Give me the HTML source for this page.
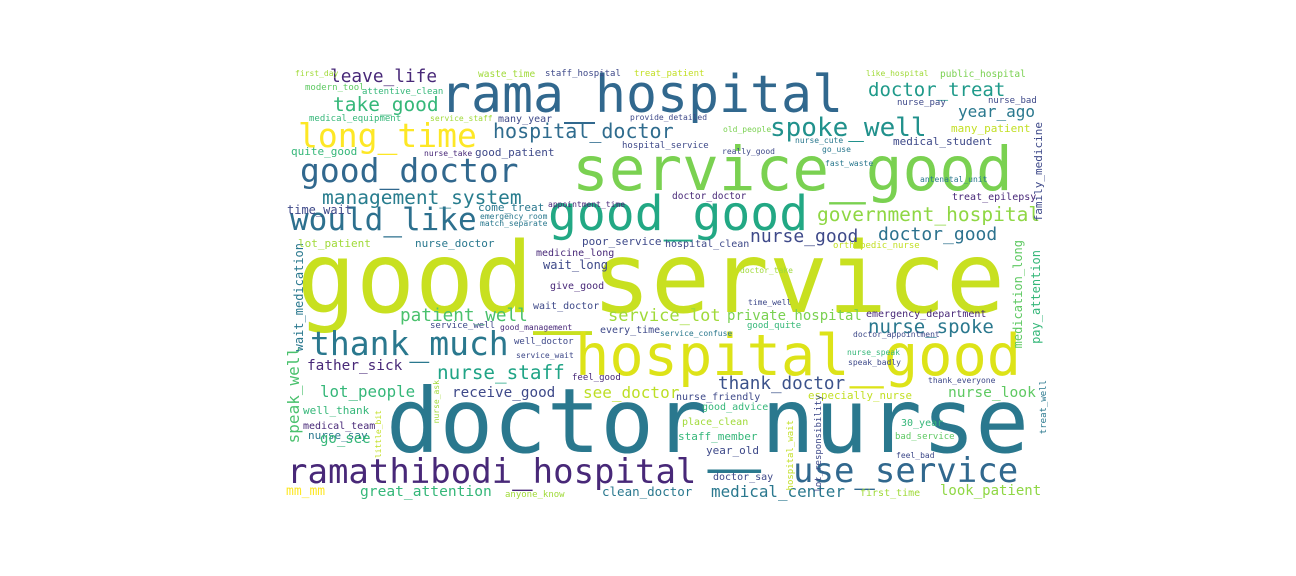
<!DOCTYPE html>
<html><head><meta charset="utf-8"><style>
html,body{margin:0;padding:0;background:#fff;width:1296px;height:576px;overflow:hidden}
#c{position:relative;width:1296px;height:576px}
#c span{position:absolute;font-family:"DejaVu Sans Mono","Liberation Mono",monospace;line-height:1;white-space:nowrap}
#c span.v{writing-mode:vertical-rl;transform:rotate(180deg)}
</style></head><body><div id="c">
<span style="left:297px;top:230px;font-size:98px;color:#c8e020">good_service</span>
<span style="left:386px;top:377px;font-size:89px;color:#2a788e">doctor_nurse</span>
<span style="left:440px;top:70px;font-size:51.5px;color:#31688e">rama_hospital</span>
<span style="left:572px;top:139px;font-size:61px;color:#7ad151">service_good</span>
<span style="left:548px;top:190px;font-size:48px;color:#22a884">good_good</span>
<span style="left:575px;top:328px;font-size:57px;color:#dde318">hospital_good</span>
<span style="left:287px;top:455px;font-size:34px;color:#482878">ramathibodi_hospital</span>
<span style="left:793px;top:454px;font-size:34px;color:#31688e">use_service</span>
<span style="left:298px;top:119px;font-size:33px;color:#fde725">long_time</span>
<span style="left:300px;top:154px;font-size:33px;color:#31688e">good_doctor</span>
<span style="left:290px;top:205px;font-size:31px;color:#2d708e">would_like</span>
<span style="left:310px;top:327px;font-size:33px;color:#2a788e">thank_much</span>
<span style="left:493px;top:121px;font-size:20px;color:#2f6c8e">hospital_doctor</span>
<span style="left:770px;top:115px;font-size:26px;color:#21918c">spoke_well</span>
<span style="left:868px;top:81px;font-size:19px;color:#1f9a8a">doctor_treat</span>
<span style="left:322px;top:188px;font-size:19.5px;color:#287d8e">management_system</span>
<span style="left:817px;top:205px;font-size:19.5px;color:#8fd744">government_hospital</span>
<span style="left:333px;top:95px;font-size:19.5px;color:#35b779">take_good</span>
<span style="left:330px;top:68px;font-size:17.8px;color:#482878">leave_life</span>
<span style="left:750px;top:228px;font-size:18px;color:#3e4989">nurse_good</span>
<span style="left:878px;top:226px;font-size:18px;color:#2c728e">doctor_good</span>
<span style="left:958px;top:104px;font-size:16px;color:#2a788e">year_ago</span>
<span style="left:400px;top:308px;font-size:17.7px;color:#4ac16d">patient_well</span>
<span style="left:608px;top:308px;font-size:17px;color:#a0da39">service_lot</span>
<span style="left:868px;top:318px;font-size:19px;color:#2a788e">nurse_spoke</span>
<span style="left:727px;top:309px;font-size:14px;color:#7ad151">private_hospital</span>
<span style="left:437px;top:363px;font-size:19.3px;color:#20a486">nurse_staff</span>
<span style="left:307px;top:359px;font-size:14.4px;color:#482878">father_sick</span>
<span style="left:320px;top:384px;font-size:15.8px;color:#35b779">lot_people</span>
<span style="left:452px;top:386px;font-size:14.3px;color:#3e4989">receive_good</span>
<span style="left:583px;top:385px;font-size:16px;color:#bddf26">see_doctor</span>
<span style="left:718px;top:376px;font-size:17.6px;color:#3b528b">thank_doctor</span>
<span style="left:948px;top:386px;font-size:14.6px;color:#5ec962">nurse_look</span>
<span style="left:808px;top:391px;font-size:10.8px;color:#c2df23">especially_nurse</span>
<span style="left:360px;top:485px;font-size:14.6px;color:#35b779">great_attention</span>
<span style="left:602px;top:486px;font-size:12.5px;color:#2a788e">clean_doctor</span>
<span style="left:711px;top:484px;font-size:15.9px;color:#2a788e">medical_center</span>
<span style="left:940px;top:484px;font-size:14px;color:#8fd744">look_patient</span>
<span style="left:286px;top:485px;font-size:13px;color:#fde725">mm_mm</span>
<span class="v" style="left:286px;top:347px;font-size:16px;color:#4ac16d">speak_well</span>
<span class="v" style="left:293px;top:243px;font-size:12px;color:#2a788e">wait_medication</span>
<span style="left:308px;top:430px;font-size:11px;color:#2a788e">nurse_say</span>
<span style="left:320px;top:432px;font-size:14px;color:#35b779">go_see</span>
<span style="left:303px;top:405px;font-size:11px;color:#35b779">well_thank</span>
<span style="left:303px;top:422px;font-size:10px;color:#482878">medical_team</span>
<span style="left:287px;top:204px;font-size:12px;color:#3e4989">time_wait</span>
<span style="left:298px;top:238px;font-size:11px;color:#a0da39">lot_patient</span>
<span style="left:415px;top:238px;font-size:11px;color:#2a788e">nurse_doctor</span>
<span style="left:291px;top:146px;font-size:11px;color:#35b779">quite_good</span>
<span style="left:309px;top:115px;font-size:9px;color:#35b779">medical_equipment</span>
<span style="left:305px;top:84px;font-size:9px;color:#5ec962">modern_tool</span>
<span style="left:295px;top:70px;font-size:8px;color:#a0da39">first_day</span>
<span style="left:362px;top:88px;font-size:9px;color:#35b779">attentive_clean</span>
<span style="left:951px;top:123px;font-size:11px;color:#c2df23">many_patient</span>
<span style="left:893px;top:136px;font-size:11px;color:#3e4989">medical_student</span>
<span style="left:952px;top:193px;font-size:10px;color:#482878">treat_epilepsy</span>
<span style="left:897px;top:99px;font-size:9px;color:#3e4989">nurse_pay</span>
<span style="left:988px;top:97px;font-size:9px;color:#3e4989">nurse_bad</span>
<span style="left:940px;top:70px;font-size:9.5px;color:#7ad151">public_hospital</span>
<span style="left:866px;top:70px;font-size:8px;color:#a0da39">like_hospital</span>
<span style="left:634px;top:70px;font-size:9px;color:#c2df23">treat_patient</span>
<span style="left:545px;top:70px;font-size:9px;color:#3e4989">staff_hospital</span>
<span style="left:478px;top:70px;font-size:9.5px;color:#a0da39">waste_time</span>
<span style="left:498px;top:115px;font-size:10px;color:#3e4989">many_year</span>
<span style="left:430px;top:115px;font-size:8px;color:#a0da39">service_staff</span>
<span style="left:630px;top:114px;font-size:8px;color:#3e4989">provide_detailed</span>
<span style="left:622px;top:142px;font-size:9px;color:#3e4989">hospital_service</span>
<span style="left:475px;top:147px;font-size:11px;color:#3e4989">good_patient</span>
<span style="left:424px;top:150px;font-size:8px;color:#482878">nurse_take</span>
<span style="left:478px;top:202px;font-size:11px;color:#2a788e">come_treat</span>
<span style="left:480px;top:213px;font-size:8px;color:#2a788e">emergency_room</span>
<span style="left:480px;top:220px;font-size:8px;color:#2a788e">match_separate</span>
<span style="left:548px;top:201px;font-size:8px;color:#482878">appointment_time</span>
<span style="left:582px;top:236px;font-size:11px;color:#3e4989">poor_service</span>
<span style="left:536px;top:249px;font-size:10px;color:#482878">medicine_long</span>
<span style="left:543px;top:259px;font-size:12px;color:#3e4989">wait_long</span>
<span style="left:550px;top:282px;font-size:10px;color:#482878">give_good</span>
<span style="left:533px;top:302px;font-size:10px;color:#3e4989">wait_doctor</span>
<span style="left:430px;top:322px;font-size:9px;color:#3e4989">service_well</span>
<span style="left:500px;top:324px;font-size:8px;color:#482878">good_management</span>
<span style="left:600px;top:326px;font-size:10px;color:#3e4989">every_time</span>
<span style="left:514px;top:338px;font-size:9px;color:#3e4989">well_doctor</span>
<span style="left:516px;top:352px;font-size:8px;color:#3e4989">service_wait</span>
<span style="left:572px;top:374px;font-size:9px;color:#482878">feel_good</span>
<span style="left:676px;top:393px;font-size:10px;color:#3e4989">nurse_friendly</span>
<span style="left:702px;top:403px;font-size:10px;color:#35b779">good_advice</span>
<span style="left:682px;top:418px;font-size:10px;color:#a0da39">place_clean</span>
<span style="left:678px;top:431px;font-size:11px;color:#35b779">staff_member</span>
<span style="left:706px;top:445px;font-size:11px;color:#3e4989">year_old</span>
<span style="left:713px;top:473px;font-size:10px;color:#3e4989">doctor_say</span>
<span style="left:505px;top:491px;font-size:9px;color:#a0da39">anyone_know</span>
<span style="left:860px;top:489px;font-size:10px;color:#a0da39">first_time</span>
<span style="left:901px;top:419px;font-size:10px;color:#35b779">30_year</span>
<span style="left:895px;top:433px;font-size:9px;color:#5ec962">bad_service</span>
<span style="left:896px;top:452px;font-size:8px;color:#3e4989">feel_bad</span>
<span style="left:672px;top:192px;font-size:9.5px;color:#482878">doctor_doctor</span>
<span style="left:665px;top:240px;font-size:10px;color:#3e4989">hospital_clean</span>
<span style="left:833px;top:242px;font-size:9px;color:#c2df23">orthopedic_nurse</span>
<span style="left:747px;top:322px;font-size:9px;color:#35b779">good_quite</span>
<span style="left:866px;top:310px;font-size:10px;color:#482878">emergency_department</span>
<span style="left:660px;top:330px;font-size:8px;color:#2a788e">service_confuse</span>
<span style="left:853px;top:331px;font-size:8px;color:#3e4989">doctor_appointment</span>
<span style="left:847px;top:349px;font-size:8px;color:#35b779">nurse_speak</span>
<span style="left:848px;top:359px;font-size:8px;color:#3e4989">speak_badly</span>
<span style="left:928px;top:377px;font-size:8px;color:#3e4989">thank_everyone</span>
<span style="left:740px;top:267px;font-size:8px;color:#a0da39">doctor_take</span>
<span style="left:748px;top:299px;font-size:8px;color:#3e4989">time_well</span>
<span style="left:822px;top:146px;font-size:8px;color:#2a788e">go_use</span>
<span style="left:825px;top:160px;font-size:8px;color:#2a788e">fast_waste</span>
<span style="left:722px;top:148px;font-size:8px;color:#3e4989">really_good</span>
<span style="left:723px;top:126px;font-size:8px;color:#7ad151">old_people</span>
<span style="left:795px;top:137px;font-size:8px;color:#2a788e">nurse_cute</span>
<span style="left:920px;top:176px;font-size:8px;color:#2a788e">antenatal_unit</span>
<span class="v" style="left:1033px;top:122px;font-size:11px;color:#3e4989">family_medicine</span>
<span class="v" style="left:1012px;top:240px;font-size:12px;color:#5ec962">medication_long</span>
<span class="v" style="left:1030px;top:250px;font-size:12px;color:#35b779">pay_attention</span>
<span class="v" style="left:1040px;top:380px;font-size:9px;color:#2a788e">treat_well</span>
<span class="v" style="left:815px;top:395px;font-size:9px;color:#3e4989">lot_responsibility</span>
<span class="v" style="left:787px;top:420px;font-size:9px;color:#c2df23">hospital_wait</span>
<span class="v" style="left:433px;top:380px;font-size:8px;color:#a0da39">nurse_ask</span>
<span class="v" style="left:375px;top:410px;font-size:8px;color:#c2df23">little_bit</span>
</div></body></html>
